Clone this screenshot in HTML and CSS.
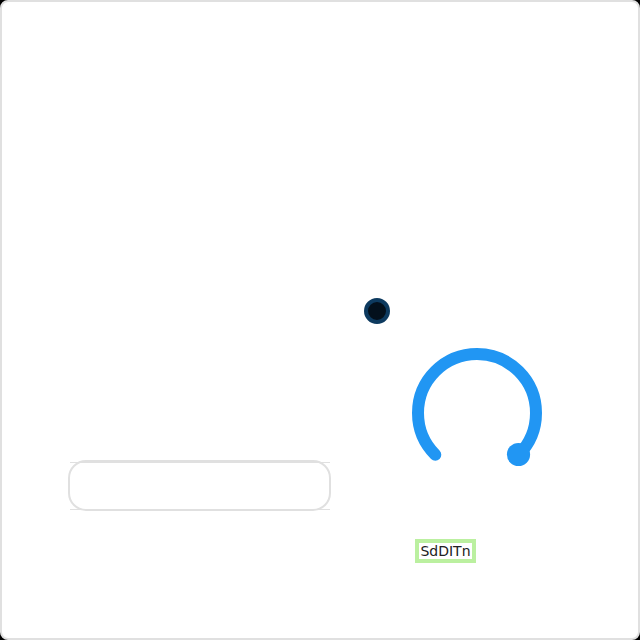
FILE: index.html
```html
<!DOCTYPE html>
<html lang="en">
<head>
<meta charset="utf-8">
<title>Panel</title>
<link rel="stylesheet" href="styles.css">
</head>
<body>
<main class="panel">
  <div class="roller"><div class="roller-rows"></div></div>
  <section class="widgets">
    <div class="led"></div>
    <div class="dial">
      <svg viewBox="0 0 130 130" aria-hidden="true">
        <path class="dial-track" d="M23.3 106.7A59 59 0 1 1 106.7 106.7"/>
        <circle class="dial-knob" cx="106.5" cy="106.5" r="11.6"/>
      </svg>
      <input class="dial-input" type="range" min="0" max="100" value="100" aria-label="Dial">
    </div>
    <span class="tag">SdDITn</span>
  </section>
</main>
</body>
</html>
```
FILE: styles.css
```css
* { box-sizing: border-box; }
body {
  margin: 0;
  background: #000;
  font-family: "DejaVu Sans", sans-serif;
  color: #212121;
}
.panel {
  min-height: 100vh;
  padding: 296px 66px 75px;
  border: 2px solid #e0e0e0;
  border-radius: 8px;
  background: #fff;
  display: flex;
  align-items: flex-start;
  gap: 33px;
}
.roller {
  flex: 0 0 263px;
  min-width: 0;
  height: 51px;
  margin-top: 162px;
  border: 2px solid #e0e0e0;
  border-radius: 18px;
}
.roller-rows {
  width: 260px;
  height: 48px;
  border: solid #e0e0e0;
  border-width: 1px 0;
}
.widgets {
  display: flex;
  flex-direction: column;
  align-items: flex-start;
}
.led {
  width: 26px;
  height: 26px;
  border: 4px solid #0d3a5f;
  border-radius: 50%;
  background: #03101c;
}
.dial {
  position: relative;
  width: 130px;
  height: 130px;
  margin: 24px 0 61px 48px;
}
.dial svg { display: block; overflow: visible; }
.dial-track {
  fill: none;
  stroke: #2196f3;
  stroke-width: 12px;
  stroke-linecap: round;
}
.dial-knob { fill: #2196f3; }
.dial-input {
  position: absolute;
  inset: 0;
  width: 100%;
  height: 100%;
  margin: 0;
  opacity: 0;
}
.tag {
  width: 61px;
  margin-left: 51px;
  border: 4px solid #bbf0a0;
  font-size: 14px;
  line-height: 16px;
  text-align: center;
}
```
